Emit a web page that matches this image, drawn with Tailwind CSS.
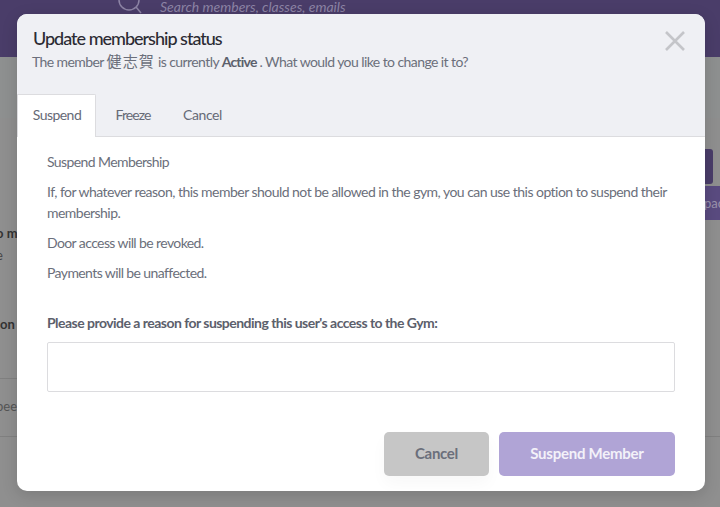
<!DOCTYPE html>
<html><head><meta charset="utf-8"><script src="https://cdn.jsdelivr.net/npm/@tailwindcss/browser@4"></script></head>
<body class="w-[720px] h-[507px] overflow-hidden relative bg-[#8f8f8f] font-['Lato','Noto_Sans_CJK_JP',sans-serif]">
<header class="h-[57px] bg-[#4a3d69] flex items-start pl-[118px] gap-[18px] overflow-hidden">
  <svg width="24" height="24" viewBox="0 0 24 24" fill="none" stroke="#8d84a5" stroke-width="1.5" class="mt-[-9px] shrink-0"><circle cx="11" cy="9" r="10"/><path d="M18 16l5 6"/></svg>
  <span class="italic text-[14px] text-[#8d84a5] leading-[15px] mt-[-1px]">Search members, classes, emails</span>
</header>
<div class="h-[61px] bg-[#8e9090]"></div>
<div class="relative h-[389px]">
  <div class="absolute left-[702px] top-[31px] w-[11px] h-[35px] rounded-r-[3px] bg-[#4a3d69]"></div>
  <div class="absolute left-[690px] top-[68px] w-[30px] h-[34px] bg-[#5a4b80] text-[#9a93ad] text-[13px] leading-[34px] pl-[14px] overflow-hidden">pac</div>
  <div class="absolute left-[-4px] top-[106px] text-[13px] font-bold text-[#333] whitespace-nowrap">o m</div>
  <div class="absolute left-[-4px] top-[128px] text-[13px] text-[#444]">e</div>
  <div class="absolute left-0 top-[197px] text-[13px] font-bold text-[#333]">on</div>
  <div class="absolute left-0 top-[260px] w-[20px] border-t border-[#808080]"></div>
  <div class="absolute left-[-4px] top-[279px] text-[13px] text-[#555]">pee</div>
  <div class="absolute left-0 top-[318px] w-full border-t border-[#808080]"></div>
</div>

<div class="absolute left-[17px] top-[14px] w-[688px] h-[477px] bg-white rounded-[10px] shadow-[0_4px_16px_rgba(0,0,0,0.15)] overflow-hidden flex flex-col">
  <div class="h-[123px] bg-[#eff0f4] border-b border-[#dcdcdf] relative shrink-0 flex flex-col">
    <h2 class="pl-[16px] pt-[12px] text-[18px] leading-[24px] font-medium text-[#2b2b33] tracking-[-1px]">Update membership status</h2>
    <p class="pl-[15px] mt-[1px] text-[14px] leading-[20px] text-[#6b6f7b] tracking-[-0.58px]">The member <span class="text-[15px] tracking-[1.1px]">健志賀</span> is currently <b class="text-[#5c606c] tracking-[-0.8px]">Active</b> . What would you like to change it to?</p>
    <svg width="24" height="24" viewBox="0 0 24 24" class="absolute right-[18px] top-[15px]" fill="none" stroke="#c4c5c9" stroke-width="2.6"><path d="M3 3l18 18M21 3L3 21"/></svg>
    <nav class="flex mt-auto mb-[-1px] text-[14px] text-[#666a76] tracking-[-0.55px]">
      <span class="h-[43px] w-[79px] bg-white border border-b-0 border-[#dcdcdf] flex items-center justify-center rounded-tr-[2px] pb-[3px] pl-[1px]">Suspend</span>
      <span class="h-[43px] w-[72px] flex items-center justify-center pl-[2px] pb-[3px] tracking-[-0.95px]">Freeze</span>
      <span class="h-[43px] w-[63px] flex items-center justify-center pl-[6px] pb-[3px] tracking-[-0.4px]">Cancel</span>
    </nav>
  </div>
  <div class="flex-1 pl-[30px] pr-[30px] text-[14px] text-[#6b6f7b] tracking-[-0.6px] leading-[20px]">
    <p class="mt-[15px]">Suspend Membership</p>
    <p class="mt-[9px] leading-[21px] tracking-[-0.53px]">If, for whatever reason, this member should not be allowed in the gym, you can use this option to suspend their membership.</p>
    <p class="mt-[10px]">Door access will be revoked.</p>
    <p class="mt-[10px]">Payments will be unaffected.</p>
    <label class="block mt-[30px] font-bold text-[#5c606c] tracking-[-0.53px]">Please provide a reason for suspending this user's access to the Gym:</label>
    <div class="mt-[9px] h-[50px] border border-[#dcdcdf] rounded-[2px]"></div>
    <div class="flex justify-end gap-[10px] mt-[40px]">
      <button class="w-[105px] h-[44px] rounded-[5px] bg-[#c6c6c6] text-[#6b6f7b] font-bold text-[15px] tracking-[-0.3px] pb-[2px] shadow-[0_8px_16px_rgba(0,0,0,0.03)]">Cancel</button>
      <button class="w-[176px] h-[44px] rounded-[5px] bg-[#b0a4d6] text-[#f3f1f9] font-bold text-[15px] tracking-[-0.25px] pb-[2px]">Suspend Member</button>
    </div>
  </div>
</div>
</body></html>
